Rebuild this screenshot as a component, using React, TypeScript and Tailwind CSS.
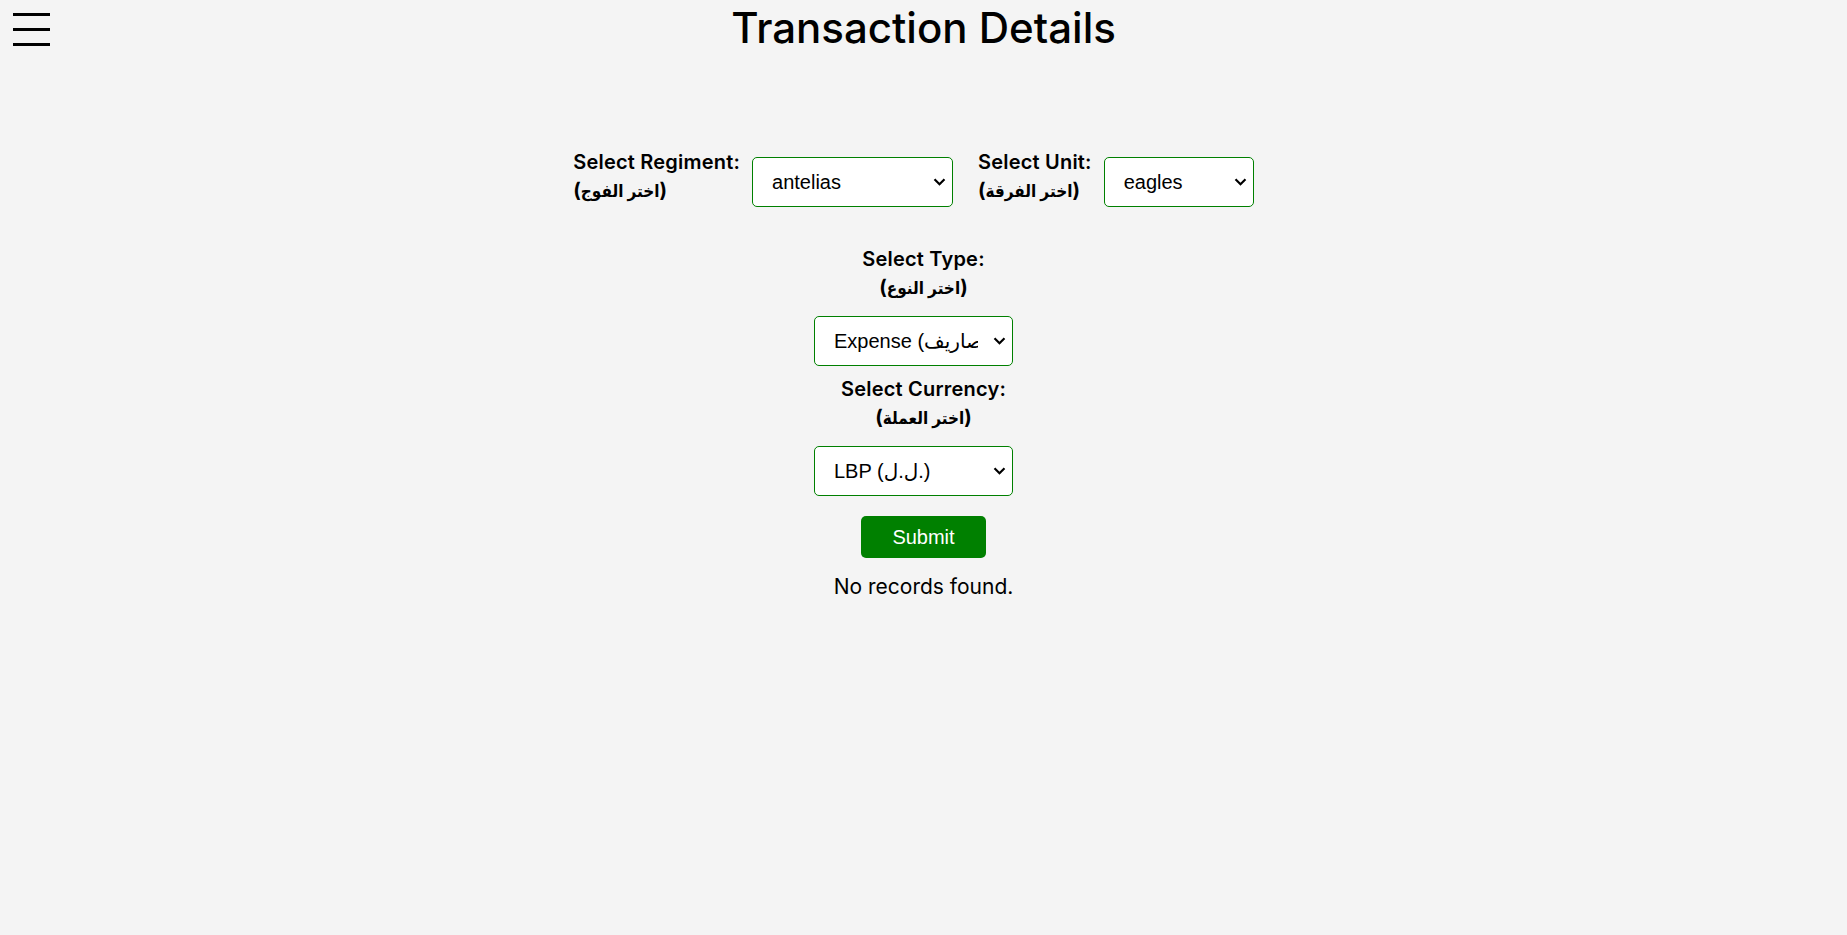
import React from "react";

function Field({ en, ar }: { en: string; ar: string }) {
  return (
    <div className="flex flex-col font-['Inter','DejaVu_Sans_Condensed','DejaVu_Sans',sans-serif] text-black">
      <span className="font-semibold text-[20px] leading-[30px] tracking-[0.2px]">{en}</span>
      <span className="font-bold text-[20px] leading-[26px]">
        (<span className="text-[17px]">{ar}</span>)
      </span>
    </div>
  );
}

function Chevron() {
  return (
    <svg
      className="pointer-events-none absolute right-[7px] top-1/2 -translate-y-1/2"
      width="13"
      height="9"
      viewBox="0 0 13 9"
      fill="none"
    >
      <path d="M1.5 1.8 L6.5 6.8 L11.5 1.8" stroke="#000" strokeWidth="2.2" />
    </svg>
  );
}

function Select({ w, value, label }: { w: string; value: string; label: string }) {
  return (
    <div className={"relative " + w}>
      <select
        className="w-full h-[50px] appearance-none bg-white border border-[#008000] rounded-[5px] pl-[19px] pr-[34px] text-[20px] text-black font-['Liberation_Sans','DejaVu_Sans',sans-serif] outline-none"
        defaultValue={value}
      >
        <option value={value}>{label}</option>
      </select>
      <Chevron />
    </div>
  );
}

export default function App() {
  return (
    <div className="min-h-screen w-full bg-[#f4f4f4] relative">
      <div className="absolute left-[13px] top-[13px] flex flex-col gap-[12px]">
        <div className="w-[37px] h-[3px] bg-black" />
        <div className="w-[37px] h-[3px] bg-black" />
        <div className="w-[37px] h-[3px] bg-black" />
      </div>
      <h1 className="text-center font-['Inter'] font-medium text-[42px] leading-[48px] pt-[4px] text-black">
        Transaction Details
      </h1>

      <div className="flex justify-center items-start mt-[95px]">
        <div className="flex items-start mr-[25px]">
          <Field en="Select Regiment:" ar="اختر الفوج" />
          <div className="ml-[12px] mt-[10px]">
            <Select w="w-[201px]" value="antelias" label="antelias" />
          </div>
        </div>
        <div className="flex items-start mr-[20px]">
          <Field en="Select Unit:" ar="اختر الفرقة" />
          <div className="ml-[12px] mt-[10px]">
            <Select w="w-[150px]" value="eagles" label="eagles" />
          </div>
        </div>
      </div>

      <div className="flex flex-col items-center mt-[37px]">
        <div className="text-center">
          <Field en="Select Type:" ar="اختر النوع" />
        </div>
        <div className="mt-[15px] mr-[20px]">
          <Select w="w-[199px]" value="expense" label="Expense (مصاريف)" />
        </div>
        <div className="text-center mt-[8px]">
          <Field en="Select Currency:" ar="اختر العملة" />
        </div>
        <div className="mt-[15px] mr-[20px]">
          <Select w="w-[199px]" value="lbp" label="LBP (ل.ل.)" />
        </div>
        <button className="mt-[20px] w-[125px] h-[42px] bg-[#008000] rounded-[5px] text-white text-[20px] font-['Liberation_Sans']">
          Submit
        </button>
        <p className="mt-[14px] font-['Inter'] text-[21px] leading-[30px] text-black">No records found.</p>
      </div>
    </div>
  );
}
